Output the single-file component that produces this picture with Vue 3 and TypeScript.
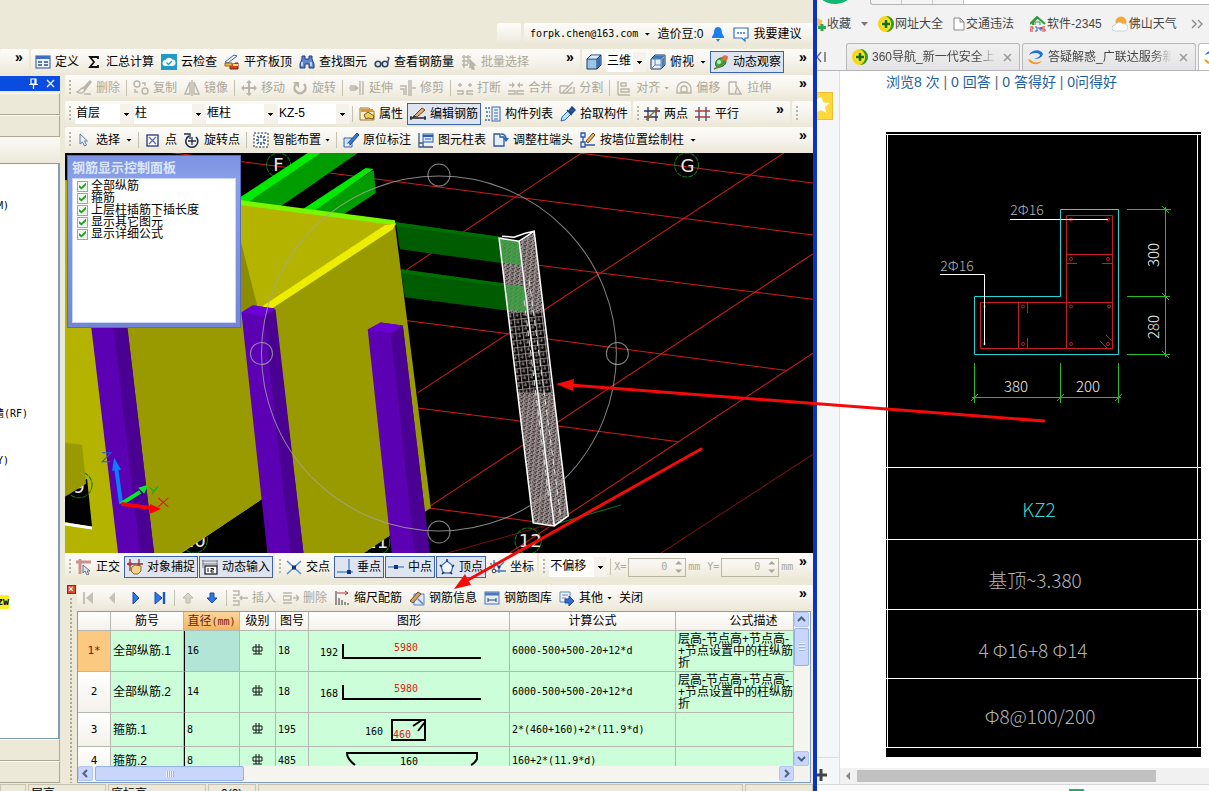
<script setup lang="ts">
import { h, ref, type VNode } from 'vue'

interface Tool {
  kind?: 'sep' | 'grip' | 'select' | 'fill' | 'more' | 'number' | 'nav'
  icon?: string
  label?: string
  unit?: string
  active?: boolean
  off?: boolean
  caret?: 'near' | 'far'
  size?: 's' | 'm' | 'l'
}

const G = '#b9b5a8'
const g = (body: string): string => `<g fill="none" stroke="${G}" stroke-width="1.4">${body}</g>`

const icons: Record<string, string> = {
  form: '<rect x="1" y="2" width="14" height="12" fill="#eaf1fc" stroke="#2b5296"/><rect x="1" y="2" width="14" height="3" fill="#3f6fc0"/><path d="M3 8h4M3 11h4M9 8h4M9 11h4" stroke="#33507c" stroke-width="1.6"/>',
  sigma: '<path d="M12 5V3H4l4 5-4 5h8v-2" fill="none" stroke="#111" stroke-width="1.8"/>',
  cloud: '<rect width="16" height="16" fill="#1e9bc9"/><path d="M4.500 12a3 3 0 0 1 0-6 4 4 0 0 1 7-.5 3.300 3.300 0 0 1 .5 6.500z" fill="#fff"/><path d="M5.500 8.500l2 2 3.500-3.500" fill="none" stroke="#1e9bc9" stroke-width="1.300"/>',
  roof: '<path d="M1 8l9-7 3 1-9 7z" fill="#eef4ff" stroke="#3b5fa5"/><path d="M1 11h5v4h8V9h-3" fill="#c9452a" stroke="#7a2413"/><path d="M1 9h7v3H1z" fill="#f3b73c" stroke="#946210"/><path d="M9 10h5v2H9z" fill="#ffd977"/>',
  bino: '<path d="M3 2h3v3h4V2h3v3l2 5v4h-5v-4H6v4H1v-4l2-5z" fill="#5d86cf" stroke="#203c7c"/><path d="M3 8v4M12 8v4" stroke="#dfeaff" stroke-width="1.500"/>',
  glasses: '<circle cx="4" cy="10" r="2.800" fill="#d9e8f5" stroke="#33475c" stroke-width="1.600"/><circle cx="11" cy="10" r="2.800" fill="#d9e8f5" stroke="#33475c" stroke-width="1.600"/><path d="M7 9.500h1M13.500 9L15 4l-2-1" fill="none" stroke="#33475c" stroke-width="1.300"/>',
  batch: g('<path d="M1 3h9M1 7h9M1 11h6M3 1v13M7 1v9"/><path d="M9 6l5 5h-2l1 4h-2l-1-3-1 1z" fill="#b9b5a8"/>'),
  cube: '<path d="M1 5l4-4h10v10l-4 4H1z" fill="#9cc4ea" stroke="#17365e"/><path d="M1 5h10v10M11 5l4-4" fill="none" stroke="#17365e"/><path d="M11.500 5.500l3-3v8.500l-3 3z" fill="#3d6da8"/><path d="M2 4.500l3.500-3h8l-3 3z" fill="#d8ebfc"/>',
  cubetop: '<path d="M1 5l4-4h10v10l-4 4H1z" fill="#e6f0fa" stroke="#17365e"/><path d="M1.500 5l3.500-3.500h9.500L11 5z" fill="#3a78bd"/><path d="M11.500 5.500l3-3v8.500l-3 3z" fill="#4d7db4"/><path d="M1 5h10v10M11 5l4-4M5 5v6h6M5 11l-4 4" fill="none" stroke="#5f84ad"/>',
  orbit: '<path d="M3 12c-2-5 3-9 7-8s4 6 0 8-6 1-7 0z" fill="#42b04a" stroke="#1d6a2a"/><path d="M1 15C7 13 12 8 14 2" fill="none" stroke="#6a7d28" stroke-width="1.500"/><circle cx="12" cy="4" r="2.800" fill="#e36e3c"/><circle cx="6" cy="8" r="2" fill="#bff0b4"/>',
  brush: g('<path d="M14 1L7 8l2 2 6-8z" fill="#b9b5a8"/><path d="M7 8c-3 0-3 3-6 4 3 2 7 1 8-2M8 14h7"/>'),
  copy: g('<circle cx="4" cy="4" r="3"/><circle cx="12" cy="11" r="3"/><path d="M9 3h3v3M2 9v3h3"/>'),
  mirror: g('<path d="M6 2v12H1zM10 2v12h5zM8 0v16"/>'),
  move: g('<path d="M8 2v12M2 8h12" stroke-width="2"/><path d="M8 0l3 3H5zM8 16l3-3H5zM0 8l3-3v6zM16 8l-3-3v6z" fill="#b9b5a8" stroke="none"/>'),
  rotate: g('<path d="M4 4a5.500 5.500 0 1 0 8 0" stroke-width="2.400"/><path d="M1 2h6v6z" fill="#b9b5a8" stroke="none"/>'),
  extend: g('<path d="M0 8h8M1 6h5M1 10h5M11 1v14M14 1v14"/><path d="M6 5l4 3-4 3z" fill="#b9b5a8" stroke="none"/>'),
  trim: g('<path d="M0 6h6v9M0 9h4v6M9 0v16M11 0v16M12 8h4"/>'),
  brk: g('<path d="M0 11h6v3H0M16 11h-6v3h6M1 5h4M11 5h4M3 3v4M13 3v4"/>'),
  merge: g('<path d="M0 11h7v3H0M16 11H9v3h7M1 5h5M10 5h5"/><path d="M4 2l3 3-3 3zM12 2L9 5l3 3z" fill="#b9b5a8" stroke="none"/>'),
  split: g('<path d="M1 6h8M1 13h14V7M1 6v7M4 12L14 2M7 13l6-6"/>'),
  alignl: g('<path d="M2 1v14M2 15h12M5 3h5v3H5zM5 9h8v3H5z"/>'),
  offset: g('<path d="M1 13V9a7 7 0 0 1 14 0v4zM5 12V9a3 3 0 0 1 6 0v3zM3 13h10"/>'),
  stretch: g('<path d="M2 2h7v5M2 2v12h5M8 14l2-7 4 7z"/>'),
  prop: '<path d="M1 2h9l2 3h3v9H1z" fill="#f7efd0" stroke="#9b7a2f"/><path d="M2 3h12v3H2z" fill="#e4923b"/><path d="M5 9l4-3 6 4-1 3-5-1-2 1z" fill="#f5cf53" stroke="#6c5418"/>',
  edit: '<path d="M0 12h16M1 10v4M15 10v4" stroke="#222" stroke-width="1.300"/><path d="M4 10l8-8 3 2-8 7z" fill="#e3b075" stroke="#69401d"/><path d="M2 12l3-1-1-2z" fill="#222"/>',
  list: '<path d="M0 2h5M1 6h4M1 10h4M0 14h5" stroke="#6c8dc4" stroke-width="2" stroke-dasharray="2 1"/><rect x="7" y="1" width="8" height="14" fill="#eaf2ff" stroke="#3c63a8"/><path d="M9 4h4M9 7h4M9 10h4M9 13h4" stroke="#3c63a8"/>',
  picker: '<path d="M1 15l1-4 6-6 3 3-6 6z" fill="#bfe1fa" stroke="#2c64ad"/><path d="M7 4l5 5M9 5l3-4 3 3-4 4z" fill="#2a5ea8" stroke="#1d437e" stroke-width="1.500"/>',
  twopt: '<path d="M0 5h16M0 11h14M4 1v14M12 1v14" stroke="#27365e" stroke-width="1.300"/><path d="M2 14L14 2" stroke="#59863c" stroke-width="1.500"/><circle cx="4" cy="11" r="1.500" fill="#b33"/><circle cx="12" cy="5" r="1.500" fill="#b33"/>',
  parallel: '<path d="M4 1v14M11 1v14" stroke="#27468e" stroke-width="1.300"/><path d="M0 5h15M0 11h15" stroke="#b23a3a" stroke-width="1.400"/>',
  cursor: '<path d="M4 2v10l2.500-2 2 4 2-1-2-4h3z" fill="#eaf1fb" stroke="#5b7ba6"/>',
  ptbox: '<rect x="2" y="3" width="11" height="11" fill="#fff" stroke="#24347c" stroke-width="1.300"/><path d="M4 5l7 7M11 5l-7 7" stroke="#5868a8" stroke-width="1.300"/>',
  rotpt: '<path d="M5 4a6 6 0 1 0 7 1" fill="none" stroke="#20304f" stroke-width="1.600"/><path d="M0 2h6v5M8 5v8M4 9h8" fill="none" stroke="#20304f" stroke-width="1.300"/>',
  smart: '<rect x="1" y="1" width="14" height="14" fill="#fff" stroke="#222" stroke-dasharray="2 1.500"/><path d="M8 3v3M8 10v3M3 8h3M10 8h3M4 4l2 2M12 4l-2 2M4 12l2-2M12 12l-2-2" stroke="#26509a" stroke-width="1.500"/>',
  origin: '<path d="M1 6h8v9H1z" fill="#cfe2fa" stroke="#3466b5"/><path d="M4 12L14 1l2 2L7 13z" fill="#3a7cd6" stroke="#1c4384"/><path d="M2 14l3-3 2 2z" fill="#fff"/>',
  coltable: '<path d="M1 1v14h14M1 11h4v4" fill="none" stroke="#35558f" stroke-width="1.300"/><rect x="5" y="2" width="10" height="8" fill="#dbe9fb" stroke="#2b5cb0"/><path d="M5 4h10" stroke="#2b5cb0" stroke-width="2"/><path d="M7 7h6" stroke="#2b5cb0"/>',
  adjust: '<path d="M1 2h6v3h4v9H1z" fill="#e6f0fd" stroke="#33559a" stroke-width="1.300"/><path d="M8 2c4 0 5 2 5 5" fill="none" stroke="#2d62c4" stroke-width="1.500"/><path d="M10 6h6l-3 4z" fill="#2d62c4"/>',
  wall: '<path d="M1 1h4v4H1zM1 10h4v5H1zM3 5v5M5 13h10" fill="#dbe8fb" stroke="#2c56ab" stroke-width="1.300"/><path d="M6 9l7-8 2 2-7 8z" fill="#e8b069" stroke="#6b441b"/>',
  ortho: '<path d="M0 3h15M4 0v15" stroke="#cf8f8f" stroke-width="3"/><path d="M7 6v8l2-2 2 4 2-1-2-3h3z" fill="#dde4ea" stroke="#66747d"/>',
  snap: '<path d="M0 5h16M3 0v12M12 0v10" stroke="#8c3030" stroke-width="1.300"/><circle cx="3" cy="5" r="2" fill="#b53a3a"/><path d="M5 8l3-2 6 1v5l-3 3H7l-3-3z" fill="#f1d489" stroke="#8c6a25"/>',
  dyn: '<path d="M0 2h16M0 5h16M1 1v8M15 1v6" stroke="#7f7f7f"/><rect x="3" y="7" width="12" height="8" fill="#fff" stroke="#222" stroke-width="1.300"/><path d="M6 9v4M8.500 9.500h3v1.500h-2.500v2h3" fill="none" stroke="#111"/>',
  cross: '<path d="M1 2l14 13M15 2L1 15" stroke="#568ccf" stroke-width="1.500"/><rect x="6" y="6.500" width="4" height="4" fill="#12327c"/>',
  perp: '<path d="M0 13h16M12 0v13" stroke="#568ccf" stroke-width="1.500"/><rect x="10" y="11" width="4" height="4" fill="#12327c"/>',
  mid: '<path d="M0 8h16" stroke="#568ccf" stroke-width="1.500"/><rect x="6" y="6" width="4" height="4" fill="#12327c"/>',
  vertex: '<path d="M8 2l6 5-2 7H4L2 7z" fill="#f2f7ff" stroke="#4776b8" stroke-width="1.300"/><path d="M8 0v3M1 6l2 2M15 6l-2 2M3 15l2-2M13 15l-2-2" stroke="#12327c" stroke-width="1.500"/>',
  coord: '<path d="M4 1v11h12M4 3l5 5 5-5M9 8v6" fill="none" stroke="#4776b8" stroke-width="1.300"/><circle cx="4" cy="12" r="1.800" fill="#fff" stroke="#333"/><circle cx="9" cy="8" r="1.500" fill="#12327c"/><path d="M0 5h2M0 9h2" stroke="#333"/>',
  first: '<path d="M4 2v12" stroke="#c4c1b6" stroke-width="2"/><path d="M13 2v12L6 8z" fill="#c4c1b6"/>',
  prev: '<path d="M11 2v12L5 8z" fill="#c4c1b6"/>',
  next: '<path d="M5 2v12l6-6z" fill="#2f76e6" stroke="#1a4aa8"/>',
  last: '<path d="M3 2v12l7-6z" fill="#2f76e6" stroke="#1a4aa8"/><path d="M12 2v12" stroke="#1a56c4" stroke-width="2.400"/>',
  up: '<path d="M8 3l5 5h-3v5H6V8H3z" fill="#d8d5ca" stroke="#bbb7aa"/>',
  down: '<path d="M8 13l5-5h-3V3H6v5H3z" fill="#2f76e6" stroke="#1a4aa8"/>',
  insert: g('<path d="M1 1h6v4H1M1 11h6v4H1M1 8h3M8 8h8M10 6l-2 2 2 2"/>'),
  del: g('<path d="M0 3h9M0 13h9M0 6h8v4H0zM10 8h6M13 5l3 3-3 3"/>'),
  scale: '<path d="M2 1v14" stroke="#333"/><path d="M3 3h11M11 1l3 2-3 2" stroke="#b33" fill="none"/><path d="M5 8v7M8 10v5M11 12v3M14 13v2" stroke="#333"/>',
  info: '<path d="M5 4h10v11H5z" fill="#dbe9fb" stroke="#5d83b9"/><path d="M1 11l8-9 3 2-8 9z" fill="#d6a067" stroke="#6b4a25"/><path d="M9 9l5 5" stroke="#5d83b9" stroke-width="1.500"/>',
  lib: '<rect x="1" y="2" width="14" height="12" fill="#e2edfc" stroke="#4a77b8"/><path d="M1 4h14" stroke="#4a77b8" stroke-width="3"/><path d="M4 8v4M4 10h8M12 8v4" stroke="#345"/>',
  other: '<path d="M1 2h10v10H1z" fill="#eef4fd" stroke="#6785b0"/><path d="M3 5h6M3 8h4" stroke="#6785b0"/><path d="M6 9h4V6l5 5-5 5v-3H6z" fill="#2f6fdc" stroke="#1b4493"/>',
  bell: '<path d="M8 1c3 0 4 3 4 6l2 4v1H2v-1l2-4c0-3 1-6 4-6z" fill="#1d7ef0"/><path d="M6 13h4l-2 3z" fill="#1d7ef0"/>',
  chat: '<path d="M1 2h14v10h-3v3l-3-3H1z" fill="#fff" stroke="#2d71cc" stroke-width="1.200"/><path d="M4 7h2M7 7h2M10 7h2" stroke="#2d71cc" stroke-width="1.600"/>',
}

const drawIcon = (name: string): VNode =>
  h('svg', { class: 'ico', viewBox: '0 0 16 16', 'aria-hidden': 'true', innerHTML: icons[name] })

const drawTool = (t: Tool): VNode => {
  switch (t.kind) {
    case 'sep':
      return h('i', { class: 'sep' })
    case 'grip':
      return h('i', { class: 'grip' })
    case 'fill':
      return h('i', { class: 'fill' })
    case 'more':
      return h('button', { class: 'more', type: 'button' }, '»')
    case 'select':
      return h('span', { class: ['pick', `pick-${t.size}`] }, [
        h('select', { 'aria-label': t.label }, [h('option', t.label)]),
      ])
    case 'number':
      return h('label', { class: 'num' }, [
        h('span', t.label),
        h('span', { class: 'box' }, [h('input', { value: '0', disabled: true }), h('i', { class: 'spin' })]),
        h('span', t.unit),
      ])
    default:
      return h(
        'button',
        { class: ['tool', { on: t.active, off: t.off, nav: t.kind === 'nav' }], type: 'button', disabled: t.off },
        [
          t.icon ? drawIcon(t.icon) : null,
          t.label ? h('span', t.label) : null,
          t.caret ? h('i', { class: ['caret', t.caret] }) : null,
        ],
      )
  }
}

const Tools = (props: { items: Tool[] }): VNode[] => props.items.map(drawTool)
Tools.props = ['items']

const sep: Tool = { kind: 'sep' }
const grip: Tool = { kind: 'grip' }
const fill: Tool = { kind: 'fill' }
const more: Tool = { kind: 'more' }
const b = (icon: string, label: string, extra: Partial<Tool> = {}): Tool => ({ icon, label, ...extra })
const d = (icon: string, label: string, extra: Partial<Tool> = {}): Tool => ({ icon, label, off: true, ...extra })

const account: Tool[] = [
  { label: 'forpk.chen@163.com', caret: 'far' },
  { label: '造价豆:0' },
  { icon: 'bell' },
  b('chat', '我要建议'),
]
const mainTools: Tool[] = [
  b('form', '定义'), b('sigma', '汇总计算'), b('cloud', '云检查'), b('roof', '平齐板顶'),
  b('bino', '查找图元'), b('glasses', '查看钢筋量'), d('batch', '批量选择'), fill, more,
]
const viewTools: Tool[] = [
  { icon: 'cube' }, { kind: 'select', label: '三维', size: 's' },
  b('cubetop', '俯视', { caret: 'far' }), b('orbit', '动态观察', { active: true }), fill, more,
]
const rows: Tool[][][] = [
  [[
    grip, d('brush', '删除'), sep, d('copy', '复制'), d('mirror', '镜像'), sep, d('move', '移动'),
    d('rotate', '旋转'), sep, d('extend', '延伸'), d('trim', '修剪'), sep, d('brk', '打断'),
    d('merge', '合并'), d('split', '分割'), sep, d('alignl', '对齐', { caret: 'near' }),
    d('offset', '偏移'), d('stretch', '拉伸'), fill, more,
  ]],
  [
    [
      grip, { kind: 'select', label: '首层', size: 'm' }, { kind: 'select', label: '柱', size: 'l' },
      { kind: 'select', label: '框柱', size: 'l' }, { kind: 'select', label: 'KZ-5', size: 'l' }, sep,
      b('prop', '属性'), b('edit', '编辑钢筋', { active: true }), b('list', '构件列表'), b('picker', '拾取构件'),
    ],
    [grip, b('twopt', '两点'), b('parallel', '平行'), fill, more],
    [grip, fill],
  ],
  [[
    grip, b('cursor', '选择', { caret: 'far' }), sep, b('ptbox', '点'), b('rotpt', '旋转点'), sep,
    b('smart', '智能布置', { caret: 'near' }), sep, b('origin', '原位标注'), b('coltable', '图元柱表'),
    b('adjust', '调整柱端头'), b('wall', '按墙位置绘制柱', { caret: 'far' }), fill, more,
  ]],
]
const snapGroups: Tool[][] = [
  [grip, b('ortho', '正交'), b('snap', '对象捕捉', { active: true }), b('dyn', '动态输入', { active: true })],
  [
    grip, b('cross', '交点'), b('perp', '垂点', { active: true }), b('mid', '中点', { active: true }),
    b('vertex', '顶点', { active: true }), b('coord', '坐标'),
  ],
  [
    grip, { kind: 'select', label: '不偏移', size: 'm' }, sep,
    { kind: 'number', label: 'X=', unit: 'mm' }, { kind: 'number', label: 'Y=', unit: 'mm' }, fill, more,
  ],
]
const n = (icon: string, off = false): Tool => ({ kind: 'nav', icon, off })
const dockTools: Tool[] = [
  n('first', true), n('prev', true), n('next'), n('last'), sep, n('up', true), n('down'), sep,
  d('insert', '插入'), d('del', '删除'), b('scale', '缩尺配筋'), b('info', '钢筋信息'), b('lib', '钢筋图库'),
  b('other', '其他', { caret: 'near' }), { label: '关闭' }, fill, more,
]

const options = ref([
  { name: '全部纵筋', on: true },
  { name: '箍筋', on: true },
  { name: '上层柱插筋下插长度', on: true },
  { name: '显示其它图元', on: true },
  { name: '显示详细公式', on: true },
])

interface Bar {
  no: string
  name: string
  dia: string
  code: string
  shape: 'bend' | 'stirrup' | 'tie'
  side: string
  len: string
  formula: string
  note: string[]
}
const note = ['层高-节点高+节点高-', '+节点设置中的柱纵筋', '折']
const bars: Bar[] = [
  { no: '1*', name: '全部纵筋.1', dia: '16', code: '18', shape: 'bend', side: '192', len: '5980', formula: '6000-500+500-20+12*d', note },
  { no: '2', name: '全部纵筋.2', dia: '14', code: '18', shape: 'bend', side: '168', len: '5980', formula: '6000-500+500-20+12*d', note },
  { no: '3', name: '箍筋.1', dia: '8', code: '195', shape: 'stirrup', side: '160', len: '460', formula: '2*(460+160)+2*(11.9*d)', note: [] },
  { no: '4', name: '箍筋.2', dia: '8', code: '485', shape: 'tie', side: '', len: '160', formula: '160+2*(11.9*d)', note: [] },
]

const tree = ['柱(M)', '墙(RF)', '梁(Y)']
const status = ['', '层高:', '底标高:', '0(0)', '', '']
</script>

<template>
  <div class="desk">
    <section class="cad">
      <header class="head">
        <div class="group stub"></div>
        <div class="group acct"><Tools :items="account" /></div>
      </header>
      <div class="bar top">
        <div class="group lead"><button class="more" type="button">»</button></div>
        <div class="group grow"><Tools :items="mainTools" /></div>
        <div class="group views"><Tools :items="viewTools" /></div>
      </div>

      <div class="work">
        <aside class="side">
          <div class="side-title">
            <svg viewBox="0 0 28 12" aria-hidden="true">
              <path d="M3 1h5v5H3zM1 6.500h9M5.500 7v4M7 1v5" fill="none" stroke="#fff" stroke-width="1.200" />
              <path d="M19 2l7 7M26 2l-7 7" stroke="#fff" stroke-width="1.200" />
            </svg>
          </div>
          <div class="side-tab"></div>
          <div class="side-tab"></div>
          <div class="side-band"></div>
          <ul class="tree">
            <li v-for="t in tree" :key="t"><span>{{ t }}</span></li>
            <li class="mark"><span>zw</span></li>
          </ul>
          <div class="side-tab foot"></div>
          <div class="side-tab foot"></div>
        </aside>

        <main class="main">
          <div v-for="(row, r) in rows" :key="r" class="bar" :class="'bar' + r">
            <div v-for="(items, k) in row" :key="k" class="group"><Tools :items="items" /></div>
          </div>

          <div class="view">
            <svg class="scene" viewBox="65 153 747 399" preserveAspectRatio="xMinYMin slice" role="img" aria-label="三维视图">
              <defs>
                <pattern id="mesh" width="5" height="4" patternUnits="userSpaceOnUse" patternTransform="rotate(5)">
                  <rect width="5" height="4" fill="#9d9090" />
                  <path d="M1 1h1M3 0h1M4 2h1M2 3h2" stroke="#0a0808" />
                </pattern>
                <pattern id="cage" width="7" height="7" patternUnits="userSpaceOnUse" patternTransform="rotate(-7)">
                  <rect width="7" height="7" fill="#060606" />
                  <path d="M0 1.500h7M1.500 0v7" stroke="#a79b9b" />
                  <path d="M3 4.500h3M5 2v4" stroke="#8a7f7f" />
                </pattern>
              </defs>
              <rect x="65" y="153" width="747" height="399" fill="#000" />
              <g fill="none" stroke="#d01c1c">
                <path d="M65 139L812 235M578 153L812 183M400 248L812 299M405 320L786 370M415 407L677 441M428 507L550 523" />
                <path d="M580 153L405 270M782 153L417 392M812 253L428 506M812 352L507 553" />
                <path d="M812 453L658 553M443 553L550 523" stroke="#7a1010" />
              </g>
              <path d="M558 522L620 504" stroke="#0a7a1a" />
              <g fill="none" stroke="#0d7a1d" stroke-dasharray="5 1">
                <circle cx="278" cy="165" r="12" /><circle cx="685" cy="165" r="12" />
                <circle cx="527" cy="540" r="13" /><circle cx="376" cy="541" r="13" />
                <circle cx="194" cy="539" r="13" />
              </g>
              <g class="axis-no">
                <text x="278" y="171">F</text><text x="686" y="172">G</text><text x="529" y="546">12</text>
                <text x="376" y="547">11</text><text x="194" y="546">10</text>
              </g>
              <path d="M240 200L308 153H357L279 207L246 203z" fill="#009c00" />
              <path d="M240 197L307 153H320L246 203L240 202z" fill="#00eb00" />
              <path d="M311 210L373 170L375 193L343 214z" fill="#009c00" />
              <path d="M302 209L365 168L373 169L313 211z" fill="#00eb00" />
              <path d="M395 222L502 237V263L399 249z" fill="#005c00" />
              <path d="M395 222L502 237V240L396 226z" fill="#006e00" />
              <path d="M400 269L510 284L512 311L404 297z" fill="#005c00" />
              <path d="M400 269L510 284V287L401 273z" fill="#006e00" />

              <path d="M65 180L240 203L392 222L268 310L262 498L180 553H65z" fill="#b3b300" />
              <path d="M126 326L262 310V498L180 552H140z" fill="#999900" />
              <path d="M240 240L257 306L240 314z" fill="#8c8c00" />
              <path d="M268 307L394 223L430 507L362 553H290z" fill="#999900" />
              <path d="M240 200L394 220L395 225L240 205z" fill="#7cf500" />
              <path d="M260 307L384 225L395 223L392 229L270 309z" fill="#eded00" />
              <path d="M65 490L87 478L92 526L65 521z" fill="#000" />
              <circle cx="79" cy="484" r="13" fill="none" stroke="#0d7a1d" stroke-dasharray="5 1" />
              <text class="nine" x="79" y="492">9</text>
              <path d="M65 442L82 444L86 483L65 496z" fill="#999900" />
              <path d="M65 523L92 527" stroke="#fff" stroke-width="3" />

              <path d="M91 325H127L154 553H118z" fill="#5b00b2" />
              <path d="M113 325H127L154 553H140z" fill="#4a0092" />
              <path d="M241 312L252 305L274 308L303 553H267z" fill="#5b00b2" />
              <path d="M263 316L275 309L303 553H290z" fill="#4a0092" />
              <path d="M241 312L252 305L274 308L263 316z" fill="#6a00d4" />
              <path d="M367 329L380 322L402 325L429 553H391z" fill="#5b00b2" />
              <path d="M390 333L402 325L429 553H414z" fill="#4a0092" />
              <path d="M367 329L380 322L402 325L390 333z" fill="#6a00d4" />

              <path d="M498 238L518 241L533 231L567 515L553 525L532 522z" fill="url(#mesh)" />
              <path d="M507 312L542 312L552 392L516 392z" fill="url(#cage)" />
              <path d="M498 238L518 241L521 265L501 262z" fill="#37a13c" opacity=".8" />
              <path d="M504 284L524 286L527 312L507 309z" fill="#37a13c" opacity=".8" />
              <path d="M498 238L532 522L553 525L567 515L533 231L518 241zM518 241L553 525M501 236L513 237L524 233L533 231" fill="none" stroke="#fff" stroke-width="1.500" />
              <path d="M523 300L548 500M528 280L560 520" stroke="#ddd" stroke-dasharray="6 4" fill="none" />

              <g fill="none" stroke="#a5a5a5" stroke-opacity=".8">
                <circle cx="438" cy="353" r="177" />
                <circle cx="438" cy="175" r="11" /><circle cx="261" cy="353" r="11" />
                <circle cx="616" cy="353" r="11" /><circle cx="438" cy="531" r="11" />
              </g>
              <g stroke-width="4">
                <path d="M121 503L116 467" stroke="#0a7dff" /><path d="M114 457l7 12-9 1z" fill="#0a7dff" />
                <path d="M121 503L140 491" stroke="#00ee20" /><path d="M148 484l-4 9-6-6z" fill="#00ee20" />
                <path d="M121 503L150 507" stroke="#f00" /><path d="M161 508l-12 5 1-10z" fill="#f00" />
              </g>
              <g fill="none" stroke-width="1">
                <path d="M102 452h9l-9 9h8" stroke="#1c62d6" />
                <path d="M158 485l-6 8M149 486l4 4" stroke="#00b020" />
                <path d="M158 497l10 9M168 497l-10 9" stroke="#e01010" />
              </g>
            </svg>

            <div class="panel">
              <div class="panel-title">钢筋显示控制面板</div>
              <div class="panel-body">
                <label v-for="o in options" :key="o.name">
                  <input v-model="o.on" type="checkbox" /><span>{{ o.name }}</span>
                </label>
              </div>
            </div>
          </div>

          <div class="bar snap">
            <div v-for="(items, k) in snapGroups" :key="k" class="group"><Tools :items="items" /></div>
          </div>

          <div class="dock">
            <div class="dock-edge"><button class="shut" type="button" aria-label="关闭面板">×</button><i></i></div>
            <div class="dock-main">
              <div class="bar dock-bar"><div class="group grow"><Tools :items="dockTools" /></div></div>
              <div class="sheet">
                <div class="sheet-view">
                  <table>
                    <colgroup>
                      <col class="c0" /><col class="c1" /><col class="c2" /><col class="c3" /><col class="c4" />
                      <col class="c5" /><col class="c6" /><col />
                    </colgroup>
                    <thead>
                      <tr>
                        <th></th><th>筋号</th><th class="cur">直径<span class="mono">(mm)</span></th><th>级别</th><th>图号</th>
                        <th>图形</th><th>计算公式</th><th class="last">公式描述</th>
                      </tr>
                    </thead>
                    <tbody>
                      <tr v-for="(bar, i) in bars" :key="bar.no" :class="{ now: i === 0, short: i === 2, tail: i === 3 }">
                        <th class="mono">{{ bar.no }}</th>
                        <td>{{ bar.name }}</td>
                        <td class="mono dia">{{ bar.dia }}</td>
                        <td class="grade">
                          <svg viewBox="0 0 11 11" role="img" aria-label="三级钢">
                            <path d="M4 0v10M7 0v10M1 3h9v4H1zM1 10h9" fill="none" stroke="#111" />
                          </svg>
                        </td>
                        <td class="mono">{{ bar.code }}</td>
                        <td class="draw">
                          <svg v-if="bar.shape === 'bend'" viewBox="0 0 200 40">
                            <path d="M34 13V27H172" fill="none" stroke="#000" stroke-width="2" />
                            <text x="11" y="25">{{ bar.side }}</text><text x="85" y="20" class="red">{{ bar.len }}</text>
                          </svg>
                          <svg v-else-if="bar.shape === 'stirrup'" viewBox="0 0 200 33">
                            <path d="M83 7h33v20H83zM104 13l9-6M109 18l7-9" fill="none" stroke="#000" stroke-width="2" />
                            <text x="56" y="22">{{ bar.side }}</text><text x="84" y="25" class="red">{{ bar.len }}</text>
                          </svg>
                          <svg v-else viewBox="0 0 200 27">
                            <path d="M46 18Q38 12 38 6H168V12Q166 16 162 18" fill="none" stroke="#000" stroke-width="2" />
                            <text x="91" y="18">{{ bar.len }}</text>
                          </svg>
                        </td>
                        <td class="mono">{{ bar.formula }}</td>
                        <td class="note"><div v-for="line in bar.note" :key="line">{{ line }}</div></td>
                      </tr>
                    </tbody>
                  </table>
                </div>
                <div class="vbar">
                  <button type="button" aria-label="向上滚动"><svg viewBox="0 0 9 9"><path d="M1 6l3.500-3.500L8 6" /></svg></button>
                  <div class="vthumb"></div>
                  <i></i>
                  <button type="button" aria-label="向下滚动"><svg viewBox="0 0 9 9"><path d="M1 3l3.500 3.500L8 3" /></svg></button>
                </div>
                <div class="hbar">
                  <button type="button" aria-label="向左滚动"><svg viewBox="0 0 9 9"><path d="M6 1L2.500 4.500L6 8" /></svg></button>
                  <div class="hthumb"></div>
                  <i></i>
                  <button type="button" aria-label="向右滚动"><svg viewBox="0 0 9 9"><path d="M3 1l3.500 3.500L3 8" /></svg></button>
                </div>
              </div>
            </div>
          </div>
        </main>
      </div>
      <footer class="status"><span v-for="(s, i) in status" :key="i" :class="'s' + i">{{ s }}</span></footer>
    </section>

    <section class="web">
      <div class="address">
        <svg viewBox="0 0 40 5" aria-hidden="true"><ellipse cx="18" cy="-9" rx="17" ry="13" fill="#12b772" /></svg>
        <div class="field"><i></i><i></i><i></i></div>
      </div>
      <nav class="marks">
        <a href="#" class="fav">
          <svg viewBox="0 0 9 16"><path d="M0 2l5 2v6H0z" fill="#f5c44a" /><path d="M5 8v7M1 11.500h8" stroke="#2fa84c" stroke-width="3" /></svg>收藏<i class="drop"></i>
        </a>
        <a href="#" class="m1">
          <svg viewBox="0 0 16 16"><circle cx="8" cy="8" r="8" fill="#f7d616" /><path d="M8 0a8 8 0 0 1 0 16 9 9 0 0 0 5-8A9 9 0 0 0 8 0z" fill="#2f9e28" /><circle cx="8" cy="8" r="5" fill="#f9e733" /><path d="M8 4v8M4 8h8" stroke="#14701b" stroke-width="2.600" /></svg>网址大全
        </a>
        <a href="#" class="m2">
          <svg viewBox="0 0 12 16"><path d="M1 2h6l4 4v8H1zM7 2v4h4" fill="#fff" stroke="#888" /></svg>交通违法
        </a>
        <a href="#" class="m3">
          <svg viewBox="0 0 16 16"><path d="M0 8l7-7 8 7M3 9V6l4-4" fill="none" stroke="#319a3a" stroke-width="2" /><path d="M5 9V6h5v3" fill="none" stroke="#319a3a" /><path d="M0 11h3v2H0v2h3M12 11h3M12 11v2h3v2h-3" fill="none" stroke="#d33" /><path d="M5 11h2v4H5M9 11v2h2v-2 4" fill="none" stroke="#2b63c9" /></svg>软件-2345
        </a>
        <a href="#" class="m4">
          <svg viewBox="0 0 16 16"><circle cx="9" cy="6" r="5.500" fill="#f7a735" /><path d="M3 15a3 3 0 0 1 0-6 5 5 0 0 1 8-1 3.500 3.500 0 0 1 2 7z" fill="#fff" stroke="#c8d0d8" /></svg>佛山天气
        </a>
        <a href="#" class="rest" aria-label="更多收藏">
          <svg viewBox="0 0 12 12"><path d="M1 2l4 4-4 4M7 2l4 4-4 4" fill="none" stroke="#888" stroke-width="1.300" /></svg>
        </a>
      </nav>
      <div class="tabs">
        <span class="back"><svg viewBox="0 0 9 12" aria-hidden="true"><path d="M4 1L0 6l4 5M8 1v10" fill="none" stroke="#666" stroke-width="1.400" /></svg></span>
        <div class="tab">
          <svg viewBox="0 0 16 16"><circle cx="8" cy="8" r="8" fill="#f7d616" /><path d="M8 0a8 8 0 0 1 0 16 9 9 0 0 0 5-8A9 9 0 0 0 8 0z" fill="#2f9e28" /><circle cx="8" cy="8" r="5" fill="#f9e733" /><path d="M8 4v8M4 8h8" stroke="#14701b" stroke-width="2.600" /></svg>
          <a href="#">360导航_新一代安全上网</a><button type="button" aria-label="关闭标签"><svg viewBox="0 0 9 9"><path d="M1 1l7 7M8 1L1 8" stroke="#999" stroke-width="1.500" /></svg></button>
        </div>
        <div class="tab">
          <svg viewBox="0 0 16 16"><path d="M1 6c3-6 12-6 14-1-1 4-5 5-9 5 4-1 6-3 6-4-2-3-8-2-11 0z" fill="#1f74d4" /><path d="M0 10c2 6 10 7 14 2-4 2-9 2-11-1z" fill="#f09a1c" /></svg>
          <a href="#">答疑解惑_广联达服务新</a><button type="button" aria-label="关闭标签"><svg viewBox="0 0 9 9"><path d="M1 1l7 7M8 1L1 8" stroke="#999" stroke-width="1.500" /></svg></button>
        </div>
        <div class="tab open">
          <svg viewBox="0 0 16 16"><path d="M1 6c3-6 12-6 14-1-1 4-5 5-9 5 4-1 6-3 6-4-2-3-8-2-11 0z" fill="#1f74d4" /><path d="M0 10c2 6 10 7 14 2-4 2-9 2-11-1z" fill="#f09a1c" /></svg>
        </div>
      </div>
      <div class="page">
        <div class="rail">
          <button class="star" type="button" aria-label="收藏夹"><svg viewBox="0 0 15 18"><path d="M4 1l2.500 5.500 6 .5-4.500 4 1.500 6L4 14l-4 2V3z" fill="#fff" /></svg></button>
          <button class="plus" type="button" aria-label="添加"><svg viewBox="0 0 12 12"><path d="M4 0v12M-2 6h12" stroke="#444" stroke-width="3" /></svg></button>
        </div>
        <div class="doc">
          <p class="stats">浏览8 次 <i>|</i> 0 回答 <i>|</i> 0 答得好 <i>|</i> 0问得好</p>
          <svg class="sketch" viewBox="886 132 315 625" role="img" aria-label="KZ2 柱配筋图">
            <rect x="886" y="132" width="315" height="625" fill="#000" />
            <path d="M886 134.500H1201M887.500 134V748M1197.500 134V748M886 467.500H1201M886 539.500H1201M886 609.500H1201M886 678.500H1201M886 747.500H1201" stroke="#fff" fill="none" />
            <path d="M1060.500 209.500H1118.500V354.500H974.500V296.500H1060.500z" fill="none" stroke="#22d5d8" />
            <g fill="none" stroke="#c91d1d">
              <path d="M1066.500 215.500H1112.500V348.500H1066.500zM980.500 302.500H1112.500V348.500H980.500zM1066.500 254.500H1112.500M1018.500 302V348M1067 263.500h10M1102 263.500h10M1027.500 303v10M1027.500 338v10M1100 341l7 7M1106 335l6 6" />
              <circle cx="1071" cy="219.500" r="1.500" /><circle cx="1108" cy="219.500" r="1.500" /><circle cx="1071" cy="259" r="1.500" />
              <circle cx="1108" cy="259" r="1.500" /><circle cx="1071" cy="306.500" r="1.500" /><circle cx="1109" cy="306.500" r="1.500" />
              <circle cx="1071" cy="344" r="1.500" /><circle cx="1108" cy="344" r="1.500" /><circle cx="1023" cy="306.500" r="1.500" />
              <circle cx="1023" cy="344" r="1.500" /><circle cx="984.500" cy="306.500" r="1" /><circle cx="984.500" cy="344" r="1" />
            </g>
            <path d="M1010 219.500H1108M940 274.500H984.500V345" stroke="#fff" fill="none" />
            <path d="M1127 209.500H1171M1127 296.500H1170M1127 354.500H1170M1165.500 207V357M974.500 363V403M1060.500 363V403M1118.500 363V403M972 397.500H1121M1162 206l7 7M1162 293l7 7M1162 351l7 7M971 401l7-7M1057 401l7-7M1115 401l7-7" stroke="#1fbf1f" fill="none" />
            <g class="small">
              <text x="1027" y="215" class="dim">2Φ16</text><text x="957" y="271" class="dim">2Φ16</text>
              <text x="1016" y="392">380</text><text x="1088" y="392">200</text>
              <text transform="translate(1159 255) rotate(-90)">300</text>
              <text transform="translate(1159 327) rotate(-90)">280</text>
            </g>
            <g class="big">
              <text x="1039" y="517" class="cyan">KZ2</text><text x="1035" y="588">基顶~3.380</text>
              <text x="1033" y="658">4 Φ16+8 Φ14</text><text x="1040" y="724">Φ8@100/200</text>
            </g>
          </svg>
        </div>
        <div class="scroll"><i class="tri"></i><div class="thumb"></div></div>
      </div>
      <div class="strip"><i></i></div>
    </section>

    <svg class="arrows" viewBox="0 0 1209 791" preserveAspectRatio="none" aria-hidden="true">
      <g fill="#f50a0a" stroke="#f50a0a">
        <path d="M1044 421L570 385" stroke-width="3" stroke-linecap="round" />
        <path d="M556 384l18-5-1 12z" stroke="none" />
        <path d="M701 449L468 580" stroke-width="3" stroke-linecap="round" />
        <path d="M454 589l11-15 6 11z" stroke="none" />
      </g>
    </svg>
  </div>
</template>

<style>
html,
body {
  margin: 0;
  background: #ece9d8;
  overflow: hidden;
}
</style>

<style scoped>
.desk {
  position: relative;
  display: grid;
  grid-template-columns: minmax(0, 817fr) minmax(0, 392fr);
  height: 100vh;
  overflow: hidden;
  font: 12px/14px "Liberation Sans", "Noto Sans CJK SC", sans-serif;
  color: #000;
}
.desk :deep(button),
.desk :deep(input),
.desk :deep(select) {
  font: inherit;
  color: inherit;
}
.cad {
  display: flex;
  flex-direction: column;
  min-height: 0;
  background: #ece9d8;
  border-right: 4px solid #0a33c4;
}
.head {
  display: flex;
  justify-content: flex-end;
  gap: 3px;
  flex: none;
  height: 49px;
  box-sizing: border-box;
  padding: 23px 0 4px;
}
.group {
  display: flex;
  align-items: center;
  gap: 1px;
  min-width: 0;
  height: 100%;
  background: linear-gradient(#fdfcfa, #f5f3eb 50%, #ebe7d6);
  border-radius: 2px;
}
.stub {
  width: 24px;
}
.acct {
  width: 289px;
}
.acct :deep(.tool) {
  padding: 0 2px;
}
.acct :deep(.tool:first-child) {
  margin-left: 3px;
  font: 10px/14px "DejaVu Sans Mono", monospace;
}
.bar {
  display: flex;
  flex: none;
  height: 26px;
  gap: 2px;
}
.lead {
  width: 29px;
  justify-content: flex-end;
}
.grow {
  flex: 1;
}
.top .grow {
  padding-left: 1px;
}
.views {
  flex: 0 0 231px;
  padding-left: 1px;
  box-sizing: border-box;
}
.bar1 .group:nth-child(2) {
  flex: 1;
}
.bar1 .group:nth-child(3) {
  flex: 0 0 21px;
}
.bar0 .group,
.bar2 .group,
.snap .group:last-child {
  flex: 1;
}
.snap {
  height: 28px;
}
.desk :deep(.tool) {
  display: flex;
  align-items: center;
  gap: 4px;
  flex: none;
  height: 22px;
  box-sizing: border-box;
  padding: 0 2px;
  border: 1px solid transparent;
  background: none;
  white-space: nowrap;
}
.desk :deep(.tool.on) {
  border-color: #3a62ad;
  background: #dfe5f0;
}
.desk :deep(.tool.off) {
  color: #aca899;
}
.desk :deep(.tool.nav) {
  margin-right: 1px;
}
.desk :deep(.ico) {
  width: 16px;
  height: 16px;
  flex: none;
}
.desk :deep(.caret) {
  width: 5px;
  height: 3px;
  background: currentColor;
  clip-path: polygon(0 0, 100% 0, 50% 100%);
}
.desk :deep(.caret.far) {
  width: 6px;
  margin-left: 2px;
}
.desk :deep(.sep) {
  width: 1px;
  height: 16px;
  flex: none;
  margin: 0 2px;
  background: #c5c2b2;
}
.dock-bar :deep(.sep) {
  margin: 0 1px;
}
.desk :deep(.grip) {
  width: 2px;
  height: 16px;
  flex: none;
  margin: 0 1px 0 4px;
  background: repeating-linear-gradient(#b9b5a5 0 2px, transparent 2px 4px);
}
.desk :deep(.fill) {
  flex: 1;
}
.desk :deep(.more) {
  align-self: flex-start;
  flex: none;
  width: 14px;
  height: 16px;
  padding: 0;
  border: 0;
  background: none;
  font: bold 14px/14px "Liberation Sans", sans-serif;
  text-align: left;
}
.desk :deep(.pick) {
  position: relative;
  flex: none;
  height: 20px;
  background: #fff;
}
.desk :deep(.pick-s) {
  width: 40px;
}
.desk :deep(.pick-m) {
  width: 58px;
  margin-left: 2px;
}
.desk :deep(.pick-l) {
  width: 71px;
}
.desk :deep(.pick::after) {
  content: "";
  position: absolute;
  right: 0;
  top: 0;
  width: 13px;
  height: 20px;
  background:
    linear-gradient(#000, #000) 4px 9px / 5px 1px no-repeat,
    linear-gradient(#000, #000) 5px 10px / 3px 1px no-repeat,
    linear-gradient(#000, #000) 6px 11px / 1px 1px no-repeat,
    #f4f2ea;
  pointer-events: none;
}
.desk :deep(.pick select) {
  width: 100%;
  height: 20px;
  padding: 0 0 2px 1px;
  border: 0;
  background: none;
  appearance: none;
}
.desk :deep(.num) {
  display: flex;
  align-items: center;
  gap: 2px;
  color: #aca899;
  font: 10px/14px "DejaVu Sans Mono", monospace;
}
.desk :deep(.num + .num) {
  margin-left: 6px;
}
.desk :deep(.num .box) {
  display: flex;
  align-items: center;
  width: 58px;
  height: 19px;
  box-sizing: border-box;
  border: 1px solid #b9b5a5;
}
.desk :deep(.num input) {
  width: 40px;
  box-sizing: border-box;
  padding: 0 2px 0 0;
  border: 0;
  background: none;
  color: #aca899;
  text-align: right;
}
.desk :deep(.num .spin) {
  width: 7px;
  height: 12px;
  margin-left: 6px;
  background: #aca899;
  clip-path: polygon(50% 0, 100% 30%, 50% 30%, 50% 70%, 100% 70%, 50% 100%, 0 70%, 50% 70%, 50% 30%, 0 30%);
}

.work {
  display: flex;
  flex: 1;
  min-height: 0;
  gap: 5px;
}
.side {
  display: flex;
  flex-direction: column;
  width: 60px;
  flex: none;
}
.side-title {
  display: flex;
  justify-content: flex-end;
  align-items: center;
  height: 15px;
  margin: 1px 0 2px;
  background: #0a4ce0;
}
.side-title svg {
  width: 28px;
  height: 12px;
  margin-right: 4px;
}
.side-tab {
  height: 20px;
  border: solid #aaa797;
  border-width: 1px 1px 1px 0;
  border-top-color: #fff;
}
.side-band {
  height: 26px;
  background: linear-gradient(#fbfaf6, #ece9d8);
}
.tree {
  display: grid;
  flex: 1;
  grid-template-rows: 49px 208px 47px 141px;
  align-items: end;
  margin: 0;
  padding: 0;
  overflow: hidden;
  list-style: none;
  background: #fff;
  border: solid #7f9db9;
  border-width: 1px 2px 1px 0;
}
.tree li {
  display: flex;
  justify-content: flex-end;
  width: 9px;
  font: 10px/14px "DejaVu Sans Mono", "Noto Sans CJK SC", monospace;
}
.tree li:nth-child(2) {
  width: 28px;
}
.tree span {
  flex: none;
}
.tree .mark span {
  background: #f8ee2a;
  font-weight: bold;
}
.main {
  display: flex;
  flex-direction: column;
  flex: 1;
  min-width: 0;
}
.view {
  position: relative;
  flex: 1;
  min-height: 0;
  overflow: hidden;
  background: #000;
}
.scene {
  display: block;
  width: 100%;
  height: 100%;
}
.axis-no text,
.nine {
  font: 18px "DejaVu Sans", sans-serif;
  fill: #e8e8e8;
  text-anchor: middle;
}
.panel {
  position: absolute;
  left: 2px;
  top: 2px;
  width: 174px;
  height: 173px;
  box-sizing: border-box;
  padding: 4px;
  display: flex;
  flex-direction: column;
  background: linear-gradient(#7d93e4, #8aa0e8 24px, #7485d6);
  border: 1px solid #5a68bd;
}
.panel-title {
  height: 18px;
  line-height: 16px;
  font-weight: bold;
  font-size: 13px;
  color: #dce6fb;
}
.panel-body {
  flex: 1;
  background: #fff;
  border: 1px solid #c9d6f4;
  padding: 1px 4px;
}
.panel-body label {
  display: flex;
  align-items: center;
  gap: 3px;
  height: 12px;
  line-height: 12px;
  white-space: nowrap;
}
.panel-body input {
  appearance: none;
  flex: none;
  width: 11px;
  height: 11px;
  margin: 0;
  border: 1px solid #a9a592;
  background: #f3f5f0;
}
.panel-body input:checked::before {
  content: "";
  display: block;
  width: 7px;
  height: 7px;
  margin: 1px;
  background: #21a121;
  clip-path: polygon(0 35%, 35% 65%, 100% 0, 100% 40%, 35% 100%, 0 70%);
}

.dock {
  display: flex;
  flex: none;
  height: 202px;
  box-sizing: border-box;
  padding-top: 4px;
}
.dock-edge {
  display: flex;
  flex-direction: column;
  align-items: center;
  gap: 4px;
  width: 12px;
}
.shut {
  width: 9px;
  height: 9px;
  padding: 0;
  border: 1px solid #8d2a16;
  background: #d8492d;
  font: bold 9px/7px "Liberation Sans", sans-serif !important;
  color: #fff !important;
}
.dock-edge i {
  flex: 1;
  width: 2px;
  background: repeating-linear-gradient(#a9a696 0 2px, transparent 2px 4px);
}
.dock-main {
  display: flex;
  flex-direction: column;
  flex: 1;
  min-width: 0;
}
.sheet {
  display: grid;
  grid-template: minmax(0, 1fr) 16px / minmax(0, 1fr) 16px;
  flex: 1;
  min-height: 0;
  margin-right: 2px;
  border: 1px solid #7f9db9;
  background: #f3f2ec;
}
.sheet-view {
  overflow: hidden;
}
table {
  width: 100%;
  table-layout: fixed;
  border-collapse: separate;
  border-spacing: 0;
}
.c0 { width: 33px; }
.c1 { width: 73px; }
.c2 { width: 56px; }
.c3 { width: 36px; }
.c4 { width: 33px; }
.c5 { width: 201px; }
.c6 { width: 166px; }
th,
td {
  box-sizing: border-box;
  height: 41px;
  padding: 0 2px;
  border: solid #b4b8b0;
  border-width: 0 1px 1px 0;
  font-weight: normal;
  white-space: nowrap;
  overflow: hidden;
}
th {
  text-align: center;
  background: linear-gradient(#fff, #f4f1ea);
}
thead th {
  height: 19px;
}
td {
  background: #ccffd9;
}
.short th,
.short td {
  height: 34px;
}
.tail th,
.tail td {
  height: 28px;
}
th.cur {
  background: linear-gradient(#fbd59c, #f3b55c);
  color: #6b1a1a;
}
th.last {
  padding-left: 40px;
}
.now th {
  background: #fbc980;
  color: #6b1a1a;
}
.mono {
  font: 10px/14px "DejaVu Sans Mono", monospace;
}
th.mono {
  font-size: 11px;
}
td.dia {
  border-left: 1px solid #000;
}
.now .dia {
  background: #b2e5d6;
}
.grade {
  text-align: center;
}
.grade svg {
  width: 11px;
  height: 11px;
}
td.draw {
  padding: 0;
}
.draw svg {
  display: block;
  width: 200px;
}
.draw text {
  font: 10px "DejaVu Sans Mono", monospace;
}
.draw .red {
  fill: #e01818;
}
td.note {
  line-height: 12px;
}
.vbar,
.hbar {
  display: flex;
  background: #f5f4ee;
}
.vbar {
  flex-direction: column;
}
.vbar i,
.hbar i {
  flex: 1;
}
.hbar button,
.vbar button {
  display: flex;
  align-items: center;
  justify-content: center;
  flex: none;
  width: 15px;
  height: 15px;
  margin: 0;
  padding: 0;
  border: 1px solid #b3c5f2;
  border-radius: 2px;
  background: #c8d6fb;
}
.hbar svg,
.vbar svg {
  width: 9px;
  height: 9px;
  fill: none;
  stroke: #4d6185;
  stroke-width: 2;
}
.vthumb {
  height: 36px;
  margin: 1px 1px 0 0;
  border: 1px solid #98b0e8;
  border-radius: 2px;
  background: repeating-linear-gradient(#eef4fe 0 1px, #9ab1ea 1px 2px, transparent 2px 3px) 4px 14px / 6px 9px no-repeat, #c8d6fb;
}
.hthumb {
  width: 147px;
  margin: 0 0 1px 2px;
  border: 1px solid #98b0e8;
  border-radius: 2px;
  background: repeating-linear-gradient(90deg, #eef4fe 0 1px, #9ab1ea 1px 2px) 70px 4px / 8px 6px no-repeat, #c8d6fb;
}
.status {
  display: flex;
  gap: 2px;
  flex: none;
  height: 8px;
  overflow: hidden;
}
.status span {
  box-sizing: border-box;
  height: 20px;
  padding: 0 0 0 2px;
  margin-top: 1px;
  line-height: 18px;
  border: 1px solid #c5c2b2;
}
.s0 { width: 26px; }
.s1 { width: 78px; }
.s2 { width: 98px; }
.status .s3 { width: 48px; padding-left: 12px; }
.s4 { flex: 1; }
.s5 { width: 68px; }

.web {
  display: flex;
  flex-direction: column;
  min-width: 0;
  min-height: 0;
  background: #f2f2f3;
  color: #444;
}
.address {
  display: flex;
  flex: none;
  height: 5px;
}
.address svg {
  width: 40px;
  height: 5px;
  margin-right: 13px;
}
.field {
  display: flex;
  flex: 1;
  border: solid #b5b5b8;
  border-width: 0 0 1px 1px;
  border-radius: 0 0 0 3px;
  background: linear-gradient(90deg, #f4f4f5 93px, #fff 93px);
}
.field i {
  width: 30px;
  border-right: 1px solid #c8c8cb;
}
.marks {
  display: flex;
  align-items: center;
  flex: none;
  height: 38px;
  white-space: nowrap;
  overflow: hidden;
}
.marks a {
  display: flex;
  align-items: center;
  gap: 1px;
  flex: none;
  margin-right: 10px;
  color: #444;
  text-decoration: none;
}
.marks svg {
  width: 16px;
  height: 16px;
}
.marks .fav svg {
  width: 9px;
}
.marks .m2 svg {
  width: 12px;
}
.marks .m2 {
  margin-right: 16px;
}
.marks .m4 {
  margin-right: 14px;
}
.marks .rest {
  margin-right: 0;
}
.marks .rest svg {
  width: 12px;
  height: 12px;
}
.drop {
  width: 7px;
  height: 4px;
  margin: 0 0 0 9px;
  background: #777;
  clip-path: polygon(0 0, 100% 0, 50% 100%);
}
.tabs {
  display: flex;
  flex: none;
  gap: 2px;
  height: 28px;
  box-sizing: border-box;
  border-bottom: 1px solid #b5b5b8;
  overflow: hidden;
}
.back {
  display: flex;
  align-items: center;
  flex: none;
  width: 27px;
}
.back svg {
  width: 9px;
  height: 12px;
}
.tab {
  display: flex;
  align-items: center;
  gap: 4px;
  flex: none;
  width: 174px;
  box-sizing: border-box;
  padding: 0 5px;
  border: 1px solid #b9b9bc;
  border-bottom: 0;
  border-radius: 3px 3px 0 0;
  background: linear-gradient(#f0f0f1, #e4e4e6);
}
.tab.open {
  background: #fff;
}
.tab svg {
  flex: none;
  width: 16px;
  height: 16px;
}
.tab a {
  flex: 1;
  min-width: 0;
  overflow: hidden;
  white-space: nowrap;
  color: #444;
  text-decoration: none;
  mask-image: linear-gradient(90deg, #000 84%, transparent);
}
.tab button {
  display: flex;
  justify-content: center;
  flex: none;
  width: 14px;
  padding: 0;
  border: 0;
  background: none;
}
.tab button svg {
  width: 9px;
  height: 9px;
}
.page {
  display: grid;
  grid-template: minmax(0, 1fr) 16px / 23px minmax(0, 1fr);
  flex: 1;
  min-height: 0;
  background: #fff;
}
.rail {
  grid-row: 1 / 3;
  display: flex;
  flex-direction: column;
  justify-content: space-between;
  align-items: flex-start;
  border-right: 1px solid #dcdee1;
  background: #f4f6f7;
}
.star {
  width: 16px;
  height: 28px;
  margin-top: 21px;
  padding: 0;
  border: 1px solid #f2be2c;
  border-left: 0;
  background: #ffd83b;
}
.star svg {
  width: 15px;
  height: 18px;
}
.plus {
  width: 23px;
  height: 27px;
  padding: 7px 0 0;
  border: 0;
  border-top: 1px solid #dcdee1;
  background: none;
  text-align: left;
}
.plus svg {
  display: block;
  width: 12px;
  height: 12px;
}
.doc {
  display: flex;
  flex-direction: column;
  padding-left: 46px;
  overflow: hidden;
}
.stats {
  flex: none;
  height: 22px;
  margin: 0 0 39px;
  font-size: 14px;
  line-height: 22px;
  color: #1f5f9f;
  white-space: nowrap;
}
.stats i {
  font-style: normal;
  color: #667;
}
.sketch {
  flex: none;
  width: 315px;
  height: 625px;
}
.small text,
.big text {
  font: 300 15px "Noto Sans CJK SC", sans-serif;
  text-anchor: middle;
  fill: #f0f0f0;
}
.small .dim {
  font-size: 14px;
  fill: #b4b4b4;
}
.big text {
  font-size: 19px;
  fill: #b4b4b4;
}
.big .cyan {
  fill: #25dfd4;
}
.scroll {
  display: flex;
  align-items: center;
  background: #f1f1f1;
}
.tri {
  width: 4px;
  height: 8px;
  margin: 0 7px 0 6px;
  background: #888;
  clip-path: polygon(100% 0, 100% 100%, 0 50%);
}
.thumb {
  width: 81%;
  height: 12px;
  background: #c1c1c1;
}
.strip {
  display: flex;
  align-items: flex-end;
  justify-content: center;
  flex: none;
  height: 7px;
  box-sizing: border-box;
  padding-left: 126px;
  border-top: 1px solid #d5d7da;
  background: #fafafa;
}
.strip i {
  width: 15px;
  height: 2px;
  background: #13b56c;
}
.arrows {
  position: absolute;
  inset: 0;
  width: 100%;
  height: 100%;
  pointer-events: none;
}
</style>
